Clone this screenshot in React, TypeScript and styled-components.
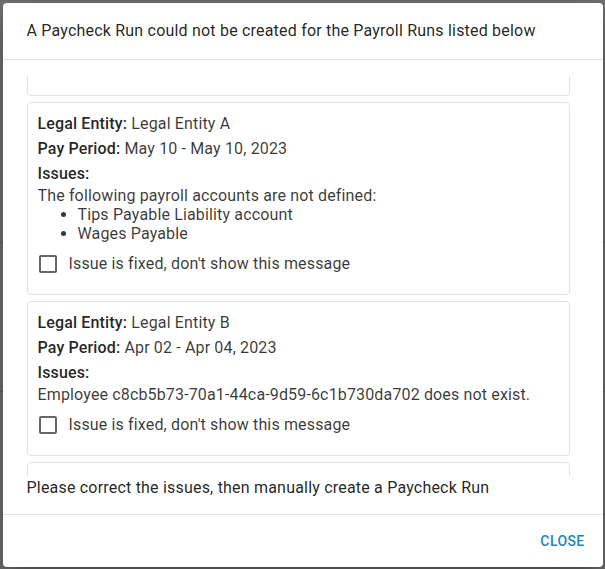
import { useLayoutEffect, useRef } from 'react';
import styled, { createGlobalStyle } from 'styled-components';

const GlobalStyle = createGlobalStyle`
  html, body {
    margin: 0;
    padding: 0;
    height: 100%;
  }
  body {
    font-family: Roboto, 'Liberation Sans', Arial, sans-serif;
    color: rgba(0, 0, 0, 0.87);
    letter-spacing: 0.15px;
  }
`;

const Backdrop = styled.div`
  position: fixed;
  inset: 0;
  display: flex;
  align-items: center;
  justify-content: center;
  background:
    linear-gradient(#5f5f5f, #5f5f5f) 0 242px / 100% 1px no-repeat,
    linear-gradient(#5f5f5f, #5f5f5f) 0 391px / 100% 1px no-repeat,
    #717171;
`;

const Dialog = styled.div`
  width: 600px;
  display: flex;
  flex-direction: column;
  background: #fff;
  border-radius: 4px;
  box-shadow: 0 11px 15px -7px rgba(0, 0, 0, 0.2), 0 24px 38px 3px rgba(0, 0, 0, 0.14),
    0 9px 46px 8px rgba(0, 0, 0, 0.12);
`;

const Title = styled.h2`
  margin: 0;
  padding: 16px 24px;
  font-size: 16px;
  font-weight: 400;
  line-height: 24px;
  letter-spacing: 0.2px;
  color: rgba(0, 0, 0, 0.87);
`;

const Content = styled.div`
  padding: 16px 24px 14px;
  border-top: 1px solid #e0e0e0;
  border-bottom: 1px solid #e0e0e0;
`;

const ScrollBox = styled.div`
  height: 400px;
  overflow-y: auto;
  padding-right: 9px;
  scrollbar-width: none;
  &::-webkit-scrollbar {
    display: none;
  }
`;

const Card = styled.div`
  border: 1px solid #e0e0e0;
  border-radius: 4px;
  padding: 8px 10px 9px;
  margin-bottom: 6px;
  font-size: 16px;
`;

const Field = styled.div`
  line-height: 25px;
  color: rgba(0, 0, 0, 0.78);
`;

const Label = styled.span`
  font-weight: 500;
  color: rgba(0, 0, 0, 0.87);
`;

const IssueText = styled.div`
  line-height: 19px;
  color: rgba(0, 0, 0, 0.78);
`;

const IssueList = styled.ul`
  margin: 0;
  padding-left: 40px;
  line-height: 19px;
  color: rgba(0, 0, 0, 0.78);
`;

const CheckRow = styled.label`
  display: flex;
  align-items: center;
  height: 42px;
  margin-left: -11px;
  cursor: pointer;
  color: rgba(0, 0, 0, 0.78);
  line-height: 24px;
`;

const CheckButton = styled.span`
  width: 42px;
  height: 42px;
  display: flex;
  align-items: center;
  justify-content: center;
  flex-shrink: 0;
  svg {
    width: 24px;
    height: 24px;
    fill: rgba(0, 0, 0, 0.6);
  }
`;

const Footnote = styled.p`
  margin: 0;
  font-size: 16px;
  line-height: 24px;
  letter-spacing: 0.2px;
  color: rgba(0, 0, 0, 0.87);
`;

const Actions = styled.div`
  display: flex;
  justify-content: flex-end;
  padding: 8px;
`;

const TextButton = styled.button`
  border: 0;
  background: transparent;
  font-family: Roboto, 'Liberation Sans', Arial, sans-serif;
  font-size: 14px;
  font-weight: 500;
  letter-spacing: 0.02857em;
  text-transform: uppercase;
  line-height: 24px;
  padding: 6px 8px;
  min-width: 64px;
  border-radius: 4px;
  color: #1a86c6;
  cursor: pointer;
  &:hover {
    background: rgba(2, 136, 209, 0.04);
  }
`;

type Run = {
  entity: string;
  period: string;
  text: string;
  accounts?: string[];
};

const runs: Run[] = [
  {
    entity: 'Legal Entity C',
    period: 'Mar 01 - Mar 15, 2023',
    text: 'Employee 4f2a91d0-3b7e-4c11-8a6f-2d9e0b7c5a13 does not exist.',
  },
  {
    entity: 'Legal Entity A',
    period: 'May 10 - May 10, 2023',
    text: 'The following payroll accounts are not defined:',
    accounts: ['Tips Payable Liability account', 'Wages Payable'],
  },
  {
    entity: 'Legal Entity B',
    period: 'Apr 02 - Apr 04, 2023',
    text: 'Employee c8cb5b73-70a1-44ca-9d59-6c1b730da702 does not exist.',
  },
  {
    entity: 'Legal Entity D',
    period: 'Jun 01 - Jun 15, 2023',
    text: 'The following payroll accounts are not defined:',
    accounts: ['Wages Payable'],
  },
];

const CheckboxIcon = () => (
  <svg viewBox="0 0 24 24" aria-hidden="true">
    <path d="M19 5v14H5V5h14m0-2H5c-1.1 0-2 .9-2 2v14c0 1.1.9 2 2 2h14c1.1 0 2-.9 2-2V5c0-1.1-.9-2-2-2z" />
  </svg>
);

const RunCard = ({ run, cardRef }: { run: Run; cardRef?: React.Ref<HTMLDivElement> }) => (
  <Card ref={cardRef}>
    <Field>
      <Label>Legal Entity:</Label> {run.entity}
    </Field>
    <Field>
      <Label>Pay Period:</Label> {run.period}
    </Field>
    <Field>
      <Label>Issues:</Label>
    </Field>
    <IssueText>{run.text}</IssueText>
    {run.accounts && (
      <IssueList>
        {run.accounts.map((a) => (
          <li key={a}>{a}</li>
        ))}
      </IssueList>
    )}
    <CheckRow>
      <CheckButton>
        <CheckboxIcon />
      </CheckButton>
      <span>Issue is fixed, don't show this message</span>
    </CheckRow>
  </Card>
);

export default function App() {
  const boxRef = useRef<HTMLDivElement>(null);
  const cardRef = useRef<HTMLDivElement>(null);

  useLayoutEffect(() => {
    const box = boxRef.current;
    const card = cardRef.current;
    if (!box || !card) return;
    box.scrollTop = card.getBoundingClientRect().top - box.getBoundingClientRect().top - 26;
  }, []);

  return (
    <>
      <GlobalStyle />
      <Backdrop>
        <Dialog role="dialog">
          <Title>A Paycheck Run could not be created for the Payroll Runs listed below</Title>
          <Content>
            <ScrollBox ref={boxRef}>
              {runs.map((run, i) => (
                <RunCard key={run.entity} run={run} cardRef={i === 1 ? cardRef : undefined} />
              ))}
            </ScrollBox>
            <Footnote>Please correct the issues, then manually create a Paycheck Run</Footnote>
          </Content>
          <Actions>
            <TextButton>Close</TextButton>
          </Actions>
        </Dialog>
      </Backdrop>
    </>
  );
}
